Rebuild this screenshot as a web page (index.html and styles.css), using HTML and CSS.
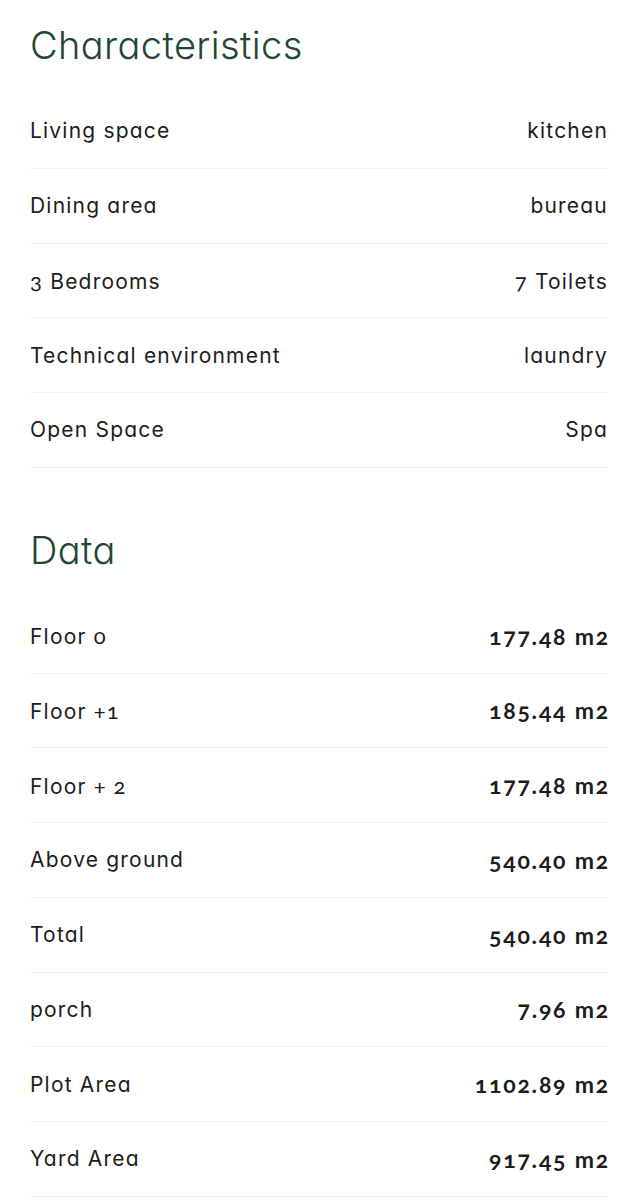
FILE: index.html
```html
<!DOCTYPE html>
<html lang="en">
<head>
<meta charset="utf-8">
<title>Characteristics</title>
<link rel="stylesheet" href="styles.css">
</head>
<body>
<main class="page">
  <section class="block">
    <h2 class="title">Characteristics</h2>
    <ul class="list">
      <li class="row"><span class="label">Living space</span><span class="val">kitchen</span></li>
      <li class="row"><span class="label">Dining area</span><span class="val">bureau</span></li>
      <li class="row"><span class="label"><span class="fig">3</span> Bedrooms</span><span class="val"><span class="fig">7</span> Toilets</span></li>
      <li class="row"><span class="label">Technical environment</span><span class="val">laundry</span></li>
      <li class="row"><span class="label">Open Space</span><span class="val">Spa</span></li>
    </ul>
  </section>
  <section class="block block-data">
    <h2 class="title">Data</h2>
    <ul class="list">
      <li class="row"><span class="label">Floor <span class="fig">0</span></span><span class="num">177.48 m2</span></li>
      <li class="row"><span class="label">Floor <span class="fig">+1</span></span><span class="num">185.44 m2</span></li>
      <li class="row"><span class="label">Floor <span class="fig">+ 2</span></span><span class="num">177.48 m2</span></li>
      <li class="row"><span class="label">Above ground</span><span class="num">540.40 m2</span></li>
      <li class="row"><span class="label">Total</span><span class="num">540.40 m2</span></li>
      <li class="row"><span class="label">porch</span><span class="num">7.96 m2</span></li>
      <li class="row"><span class="label">Plot Area</span><span class="num">1102.89 m2</span></li>
      <li class="row"><span class="label">Yard Area</span><span class="num">917.45 m2</span></li>
    </ul>
  </section>
</main>
</body>
</html>
```
FILE: styles.css
```css
html, body {
  margin: 0;
  padding: 0;
  background: #ffffff;
}
body {
  font-family: "Inter", "Lato", sans-serif;
  font-feature-settings: "cv11" 1;
  color: #1c1c1c;
}
.page {
  padding: 22px 30px 0 30px;
}
.title {
  margin: 0 0 26px 0;
  font-family: "Inter", sans-serif;
  font-weight: 300;
  font-size: 38px;
  line-height: 46px;
  color: #1f4636;
  letter-spacing: 0.4px;
}
.block-data {
  margin-top: 59px;
}
.list {
  list-style: none;
  margin: 0;
  padding: 0;
}
.row {
  display: flex;
  justify-content: space-between;
  align-items: center;
  height: 74.75px;
  box-sizing: border-box;
  border-bottom: 1px solid #efefef;
  font-size: 21px;
  letter-spacing: 1.2px;
}
.label, .val {
  font-weight: 400;
}
.fig {
  font-family: "Lato", sans-serif;
  font-variant-numeric: oldstyle-nums;
  font-size: 22px;
}
.num {
  font-family: "Lato", sans-serif;
  font-variant-numeric: oldstyle-nums;
  font-weight: 700;
  font-size: 23px;
  letter-spacing: 1.8px;
  margin-right: -2px;
}
```
